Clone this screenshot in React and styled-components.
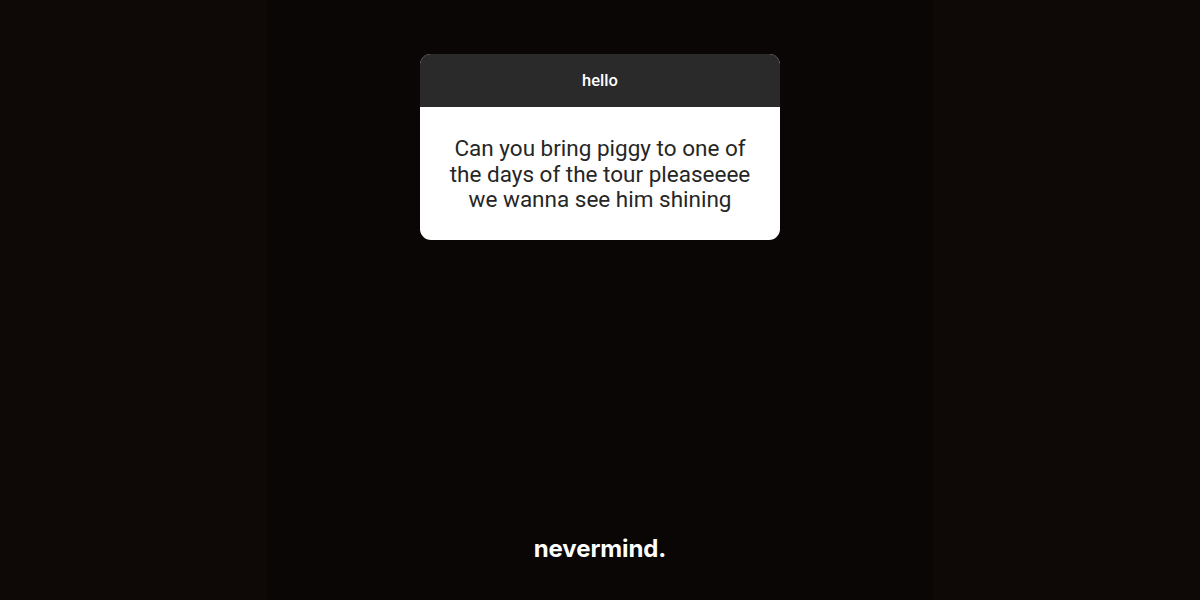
import React from "react";
import styled, { createGlobalStyle } from "styled-components";

const Global = createGlobalStyle`
  html, body { margin: 0; padding: 0; background: #0e0906; }
  body { font-family: "Liberation Sans", Arial, sans-serif; }
`;

const Page = styled.div`
  width: 1200px;
  height: 600px;
  display: flex;
  justify-content: center;
  background: #0e0906;
  overflow: hidden;
`;

const Story = styled.div`
  width: 668px;
  height: 600px;
  background: #090605;
  display: flex;
  flex-direction: column;
  align-items: center;
  box-sizing: border-box;
  padding-top: 54px;
`;

const Card = styled.div`
  width: 360px;
  border-radius: 11px;
  overflow: hidden;
  background: #ffffff;
  display: flex;
  flex-direction: column;
  font-family: Roboto, "Liberation Sans", Arial, sans-serif;
`;

const CardHeader = styled.div`
  height: 53px;
  background: #2a2a2a;
  color: #ffffff;
  display: flex;
  align-items: center;
  justify-content: center;
  font-size: 16.5px;
  font-weight: 500;
`;

const CardBody = styled.div`
  padding: 29px 16px 27px;
  color: #262626;
  font-size: 22.5px;
  line-height: 25.5px;
  text-align: center;
`;

const Caption = styled.div`
  margin-top: auto;
  margin-bottom: 37px;
  color: #ffffff;
  font-family: Inter, "Liberation Sans", sans-serif;
  font-size: 24px;
  font-weight: 700;
  letter-spacing: -0.1px;
`;

export default function App() {
  return (
    <>
      <Global />
      <Page>
        <Story>
          <Card>
            <CardHeader>hello</CardHeader>
            <CardBody>
              Can you bring piggy to one of
              <br />
              the days of the tour pleaseeee
              <br />
              we wanna see him shining
            </CardBody>
          </Card>
          <Caption>nevermind.</Caption>
        </Story>
      </Page>
    </>
  );
}
